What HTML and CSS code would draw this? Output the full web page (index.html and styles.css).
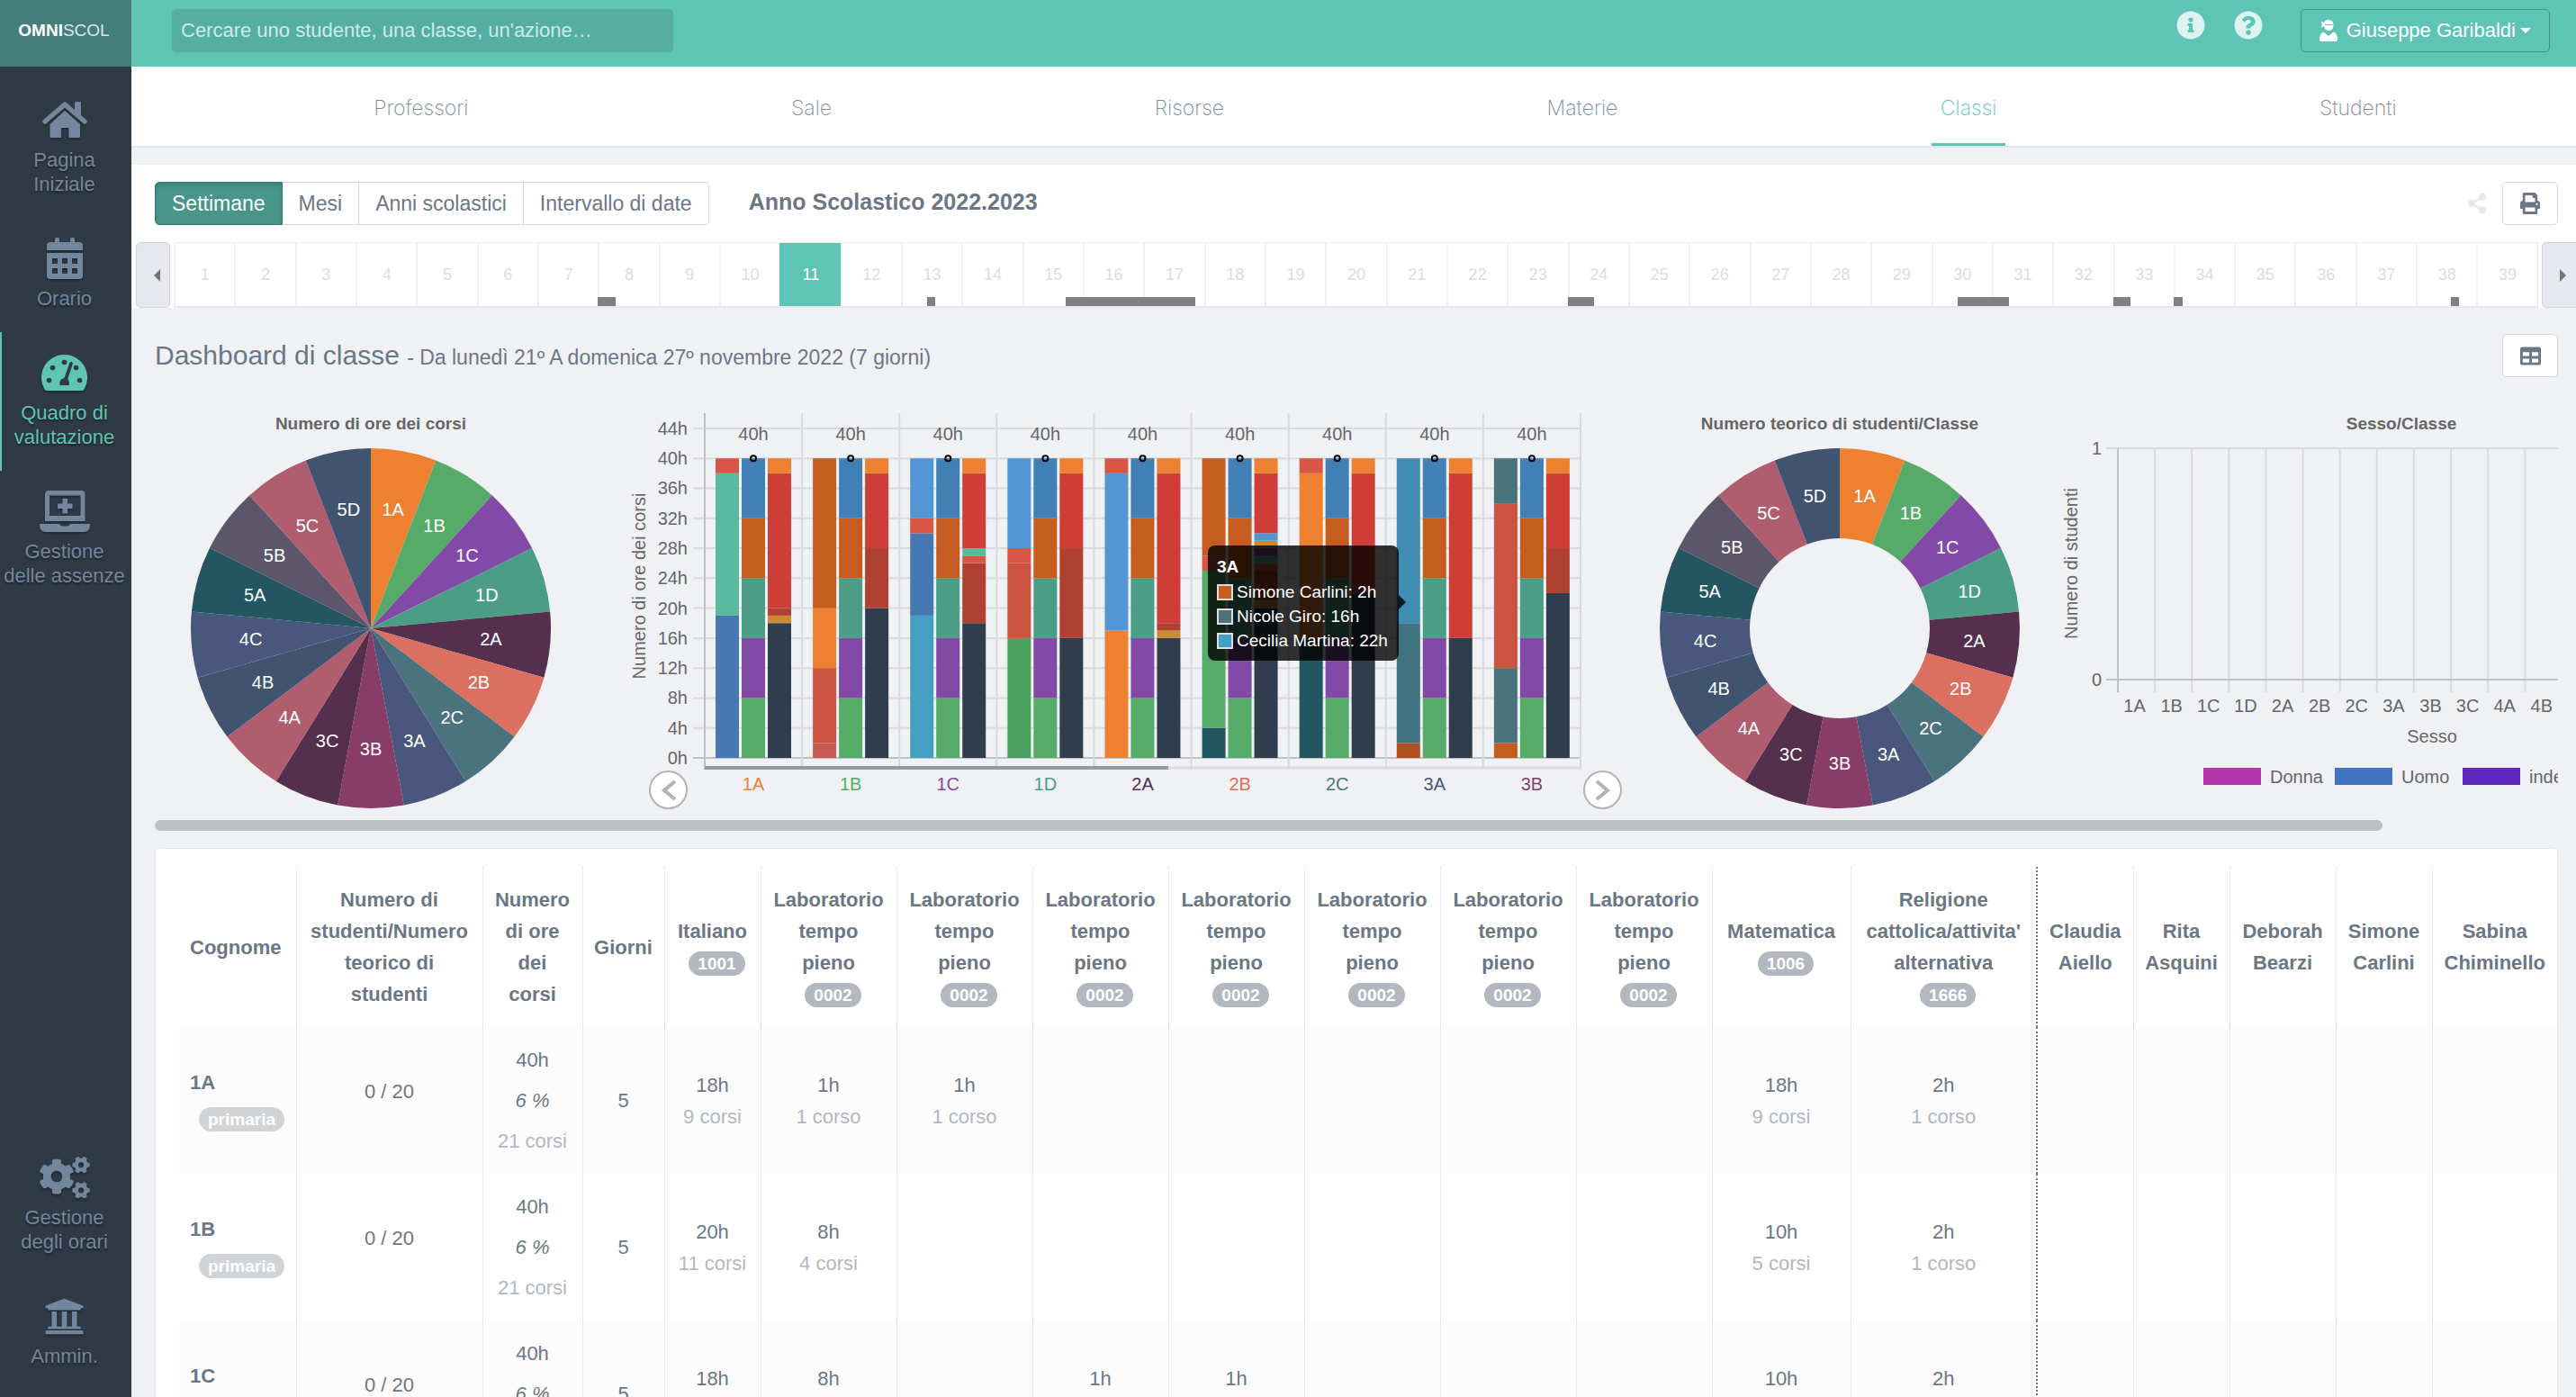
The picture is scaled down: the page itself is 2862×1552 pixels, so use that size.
FILE: index.html
```html
<!DOCTYPE html>
<html lang="it">
<head>
    <meta charset="UTF-8">
    <meta name="viewport" content="width=device-width, initial-scale=1.0">
    <title>Omniscol - Dashboard di classe</title>
    <link rel="stylesheet" href="styles.css">
</head>
<body>
    <div class="app">
        <aside class="sidebar">
            <a class="logo" href="#"><b>OMNI</b>SCOL</a>
            <nav class="side-nav">
                <a class="side-item" href="#">
                    <span class="side-icon">
                        <svg width="50" height="42" viewBox="0 0 50 42" fill="currentColor">
                            <path d="M36 2.500q0-1.500 1.500-1.500h4q1.500 0 1.500 1.500V17l-7-6z"/>
                            <path d="M3 23L25 4L47 23" fill="none" stroke="currentColor" stroke-width="5.500" stroke-linejoin="round" stroke-linecap="round"/>
                            <path d="M25 11L42 26V39.500q0 1.500-1.500 1.500H29.500V31q0-1-1-1H22q-1 0-1 1V41H10q-1.500 0-1.500-1.500V26z"/>
                        </svg>
                    </span>
                    Pagina<br>Iniziale
                </a>
                <a class="side-item" href="#">
                    <span class="side-icon">
                        <svg width="40" height="46" viewBox="0 0 40 46" fill="currentColor" fill-rule="evenodd">
                            <path d="M0 14V9q0-4 4-4H9V1.500Q9 0 10.500 0h2Q14 0 14 1.500V5H26V1.500Q26 0 27.500 0h2Q31 0 31 1.500V5h5q4 0 4 4v5z"/>
                            <path d="M0 17H40V42q0 4-4 4H4q-4 0-4-4zM6 23v6h6v-6zM17 23v6h6v-6zM28 23v6h6v-6zM6 34v6h6v-6zM17 34v6h6v-6zM28 34v6h6v-6z"/>
                        </svg>
                    </span>
                    Orario
                </a>
                <a class="side-item active" href="#">
                    <span class="side-icon">
                        <svg width="51" height="40" viewBox="0 0 51 40" fill="currentColor">
                            <path d="M25.500 0A25.500 25.500 0 0 0 3.500 38.500Q4.300 40 6 40H45Q46.700 40 47.500 38.500A25.500 25.500 0 0 0 25.500 0z"/>
                            <g fill="#303a44">
                                <circle cx="25.500" cy="8.500" r="2.800"/>
                                <circle cx="12.500" cy="14.500" r="2.800"/>
                                <circle cx="38.500" cy="14.500" r="2.800"/>
                                <circle cx="8.500" cy="28.500" r="2.800"/>
                                <circle cx="42.500" cy="28.500" r="2.800"/>
                                <path d="M31.500 8.800q1-1.400 2.300-.7t1 2.200L29.300 27q2.300 2.500 1.200 7H20.500q-1.500-6.500 5-8.200z"/>
                            </g>
                        </svg>
                    </span>
                    Quadro di<br>valutazione
                </a>
                <a class="side-item" href="#">
                    <span class="side-icon">
                        <svg width="56" height="46" viewBox="0 0 56 46" fill="currentColor" fill-rule="evenodd">
                            <path d="M6 34V4q0-4 4-4H46.500q4 0 4 4V34zM11 5.500V28H45.500V5.500z"/>
                            <path d="M25.500 9h5.500v5.500h5.500v5.500H31v5.500H25.500V20H20V14.500h5.500z"/>
                            <path d="M1 37H22q.5 2.500 3 2.500h6q2.500 0 3-2.500H55q1 0 1 1 0 8-7 8H7q-7 0-7-8 0-1 1-1z"/>
                        </svg>
                    </span>
                    Gestione<br>delle assenze
                </a>
            </nav>
            <nav class="side-nav side-bottom">
                <a class="side-item" href="#">
                    <span class="side-icon">
                        <svg width="56" height="46" viewBox="0 0 640 530" fill="currentColor">
                            <path id="small-cog" d="M512.100 191l-8.200 14.300c-3 5.300-9.400 7.500-15.100 5.400-11.800-4.400-22.600-10.700-32.100-18.600-4.600-3.800-5.800-10.500-2.800-15.700l8.200-14.300c-6.900-8-12.300-17.300-15.900-27.400h-16.500c-6 0-11.200-4.300-12.200-10.300-2-12-2.100-24.600 0-37.100 1-6 6.200-10.400 12.200-10.400h16.500c3.600-10.100 9-19.400 15.900-27.400l-8.200-14.300c-3-5.200-1.900-11.900 2.800-15.700 9.500-7.900 20.400-14.200 32.100-18.600 5.700-2.100 12.100.1 15.100 5.400l8.200 14.300c10.500-1.900 21.200-1.900 31.700 0L552 6.300c3-5.300 9.400-7.500 15.100-5.400 11.800 4.400 22.600 10.700 32.100 18.600 4.600 3.800 5.800 10.500 2.800 15.700l-8.200 14.300c6.900 8 12.300 17.300 15.900 27.400h16.500c6 0 11.200 4.300 12.200 10.300 2 12 2.100 24.600 0 37.100-1 6-6.200 10.400-12.200 10.400h-16.500c-3.600 10.100-9 19.400-15.900 27.400l8.200 14.300c3 5.200 1.900 11.900-2.800 15.700-9.500 7.900-20.400 14.200-32.100 18.600-5.700 2.100-12.100-.1-15.100-5.400l-8.200-14.300c-10.400 1.900-21.200 1.900-31.700 0zm-10.500-58.800c38.500 29.600 82.400-14.300 52.800-52.800-38.500-29.700-82.400 14.300-52.800 52.800z"/>
                            <use href="#small-cog" y="325"/>
                            <path d="M386.300 286.100l33.700 16.800c10.100 5.800 14.500 18.100 10.500 29.100-8.900 24.200-26.400 46.400-42.600 65.800-7.400 8.900-20.200 11.100-30.300 5.300l-29.100-16.800c-16 13.700-34.600 24.600-54.900 31.700v33.600c0 11.600-8.300 21.600-19.700 23.600-24.600 4.200-50.400 4.400-75.900 0-11.500-2-20-11.900-20-23.600V418c-20.300-7.200-38.900-18-54.900-31.700L74 403c-10 5.800-22.900 3.600-30.300-5.300-16.200-19.400-33.300-41.600-42.200-65.700-4-10.900.4-23.200 10.500-29.100l33.300-16.800c-3.900-20.900-3.900-42.400 0-63.400L12 205.800c-10.100-5.800-14.600-18.100-10.500-29 8.900-24.200 26-46.400 42.200-65.800 7.400-8.900 20.200-11.100 30.300-5.300l29.100 16.800c16-13.700 34.600-24.600 54.900-31.700V57.100c0-11.500 8.200-21.500 19.600-23.500 24.600-4.200 50.500-4.400 76-.1 11.500 2 20 11.900 20 23.600v33.600c20.300 7.200 38.900 18 54.900 31.700l29.100-16.800c10-5.800 22.900-3.600 30.300 5.300 16.200 19.400 33.200 41.600 42.100 65.800 4 10.900.1 23.200-10 29.100l-33.700 16.800c3.900 21 3.900 42.500 0 63.500zm-117.600 21.100c59.200-77-28.700-164.900-105.700-105.700-59.200 77 28.700 164.900 105.700 105.700z"/>
                        </svg>
                    </span>
                    Gestione<br>degli orari
                </a>
                <a class="side-item" href="#">
                    <span class="side-icon">
                        <svg width="45" height="45" viewBox="0 0 512 512" fill="currentColor">
                            <path d="M496 128v16a8 8 0 0 1-8 8h-24v12c0 6.627-5.373 12-12 12H60c-6.627 0-12-5.373-12-12v-12H24a8 8 0 0 1-8-8v-16a8 8 0 0 1 4.941-7.392l232-88a7.996 7.996 0 0 1 6.118 0l232 88A8 8 0 0 1 496 128zm-24 304H40c-13.255 0-24 10.745-24 24v16a8 8 0 0 0 8 8h464a8 8 0 0 0 8-8v-16c0-13.255-10.745-24-24-24zM96 192v192H60c-6.627 0-12 5.373-12 12v20h416v-20c0-6.627-5.373-12-12-12h-36V192h-64v192h-64V192h-64v192h-64V192H96z"/>
                        </svg>
                    </span>
                    Ammin.
                </a>
            </nav>
        </aside>

        <div class="content">
            <header class="topbar">
                <input class="search" type="text" aria-label="Cerca" placeholder="Cercare uno studente, una classe, un'azione…">
                <div class="topbar-right">
                    <button class="icon-btn" aria-label="Informazioni">
                        <svg width="32" height="32" viewBox="0 0 512 512" fill="currentColor"><path d="M256 8C119.043 8 8 119.083 8 256c0 136.997 111.043 248 248 248s248-111.003 248-248C504 119.083 392.957 8 256 8zm0 110c23.196 0 42 18.804 42 42s-18.804 42-42 42-42-18.804-42-42 18.804-42 42-42zm56 254c0 6.627-5.373 12-12 12h-88c-6.627 0-12-5.373-12-12v-24c0-6.627 5.373-12 12-12h12v-64h-12c-6.627 0-12-5.373-12-12v-24c0-6.627 5.373-12 12-12h64c6.627 0 12 5.373 12 12v100h12c6.627 0 12 5.373 12 12v24z"/></svg>
                    </button>
                    <button class="icon-btn" aria-label="Aiuto">
                        <svg width="32" height="32" viewBox="0 0 512 512" fill="currentColor"><path d="M504 256c0 136.997-111.043 248-248 248S8 392.997 8 256C8 119.083 119.043 8 256 8s248 111.083 248 248zM262.655 90c-54.497 0-89.255 22.957-116.549 63.758-3.536 5.286-2.353 12.415 2.715 16.258l34.699 26.310c5.205 3.947 12.621 3.008 16.665-2.122 17.864-22.658 30.113-35.797 57.303-35.797 20.429 0 45.698 13.148 45.698 32.958 0 14.976-12.363 22.667-32.534 33.976C247.128 238.528 216 254.941 216 296v4c0 6.627 5.373 12 12 12h56c6.627 0 12-5.373 12-12v-1.333c0-28.462 83.186-29.647 83.186-106.667 0-58.002-60.165-102-116.531-102zM256 338c-25.365 0-46 20.635-46 46 0 25.364 20.635 46 46 46s46-20.636 46-46c0-25.365-20.635-46-46-46z"/></svg>
                    </button>
                    <button class="user-btn">
                        <svg width="20" height="24" viewBox="0 0 20 24" fill="currentColor">
                            <path d="M10 0q5.500 0 5.500 6T10 12Q6 12 5 7L1.500 8.500 3 5 1.500 2 5 3Q6.500 0 10 0z"/>
                            <path d="M0 22q0-7 4.500-8.500L10 18l5.500-4.500Q20 15 20 22q0 2-2 2H2q-2 0-2-2z"/>
                            <path d="M6 5.500h8" stroke="#5ec4b5" stroke-width="1"/>
                        </svg>
                        <span>Giuseppe Garibaldi</span>
                        <i class="caret"></i>
                    </button>
                </div>
            </header>

            <nav class="tabs">
                <a class="tab" href="#">Professori</a>
                <a class="tab" href="#">Sale</a>
                <a class="tab" href="#">Risorse</a>
                <a class="tab" href="#">Materie</a>
                <a class="tab active" href="#">Classi</a>
                <a class="tab" href="#">Studenti</a>
            </nav>

            <section class="period">
                <div class="period-bar">
                    <div class="btn-group">
                        <button class="btn active">Settimane</button>
                        <button class="btn">Mesi</button>
                        <button class="btn">Anni scolastici</button>
                        <button class="btn">Intervallo di date</button>
                    </div>
                    <h2 class="year">Anno Scolastico 2022.2023</h2>
                    <svg class="share" width="20" height="24" viewBox="0 0 20 24" fill="currentColor">
                        <circle cx="4" cy="12" r="4"/><circle cx="16" cy="4.500" r="4"/><circle cx="16" cy="19.500" r="4"/>
                        <path d="M16 4.500L4 12l12 7.500" fill="none" stroke="currentColor" stroke-width="2.500"/>
                    </svg>
                    <button class="btn btn-icon" aria-label="Stampa">
                        <svg width="22" height="24" viewBox="0 0 512 512" preserveAspectRatio="none" fill="currentColor"><path d="M448 192V77.250c0-8.490-3.370-16.620-9.370-22.630L393.370 9.370c-6-6-14.140-9.370-22.630-9.370H96C78.330 0 64 14.330 64 32v160c-35.350 0-64 28.650-64 64v112c0 8.840 7.160 16 16 16h48v96c0 17.670 14.330 32 32 32h320c17.670 0 32-14.330 32-32v-96h48c8.840 0 16-7.160 16-16V256c0-35.350-28.650-64-64-64zm-64 256H128v-96h256v96zm0-224H128V64h192v48c0 8.840 7.160 16 16 16h48v96zm48 72c-13.250 0-24-10.750-24-24 0-13.260 10.750-24 24-24s24 10.740 24 24c0 13.250-10.750 24-24 24z"/></svg>
                    </button>
                </div>
                <div class="week-strip">
                    <button class="week-arrow prev" aria-label="Precedente"></button>
                    <div class="weeks" id="weeks"></div>
                    <button class="week-arrow next" aria-label="Successivo"></button>
                </div>
            </section>

            <main class="main">
                <div class="main-head">
                    <h1>Dashboard di classe <small>- Da lunedì 21º A domenica 27º novembre 2022 (7 giorni)</small></h1>
                    <button class="btn btn-icon" aria-label="Tabella">
                        <svg width="23" height="23" viewBox="0 0 512 512" fill="currentColor"><path d="M464 32H48C21.490 32 0 53.490 0 80v352c0 26.510 21.490 48 48 48h416c26.510 0 48-21.490 48-48V80c0-26.510-21.490-48-48-48zM224 416H64v-96h160v96zm0-160H64v-96h160v96zm224 160H288v-96h160v96zm0-160H288v-96h160v96z"/></svg>
                    </button>
                </div>

                <div class="charts">
                    <svg class="chart" id="hoursPie" width="480" height="472"></svg>
                    <div class="chart-box">
                        <svg class="chart" id="hoursBars" width="1152" height="472"></svg>
                        <button class="chart-nav left" aria-label="Classi precedenti"><svg width="18" height="24" viewBox="0 0 18 24"><path d="M16 2L4 12l12 10" fill="none" stroke="#b3b3b3" stroke-width="4"/></svg></button>
                        <button class="chart-nav right" aria-label="Classi successive"><svg width="18" height="24" viewBox="0 0 18 24"><path d="M2 2l12 10L2 22" fill="none" stroke="#b3b3b3" stroke-width="4"/></svg></button>
                        <div class="tooltip">
                            <strong>3A</strong>
                            <span><i class="swatch brown"></i>Simone Carlini: 2h</span>
                            <span><i class="swatch slate"></i>Nicole Giro: 16h</span>
                            <span><i class="swatch cyan"></i>Cecilia Martina: 22h</span>
                        </div>
                    </div>
                    <svg class="chart" id="studentsPie" width="480" height="472"></svg>
                    <svg class="chart" id="genderChart" width="768" height="472"></svg>
                </div>
                <div class="scrollbar"><div class="scrollbar-thumb"></div></div>

                <div class="panel">
                    <table>
                        <colgroup>
                            <col class="c-name"><col class="c-wide"><col class="c-hours"><col class="c-days"><col class="c-small">
                            <col class="c-lab" span="7"><col class="c-subject">
                            <col class="c-wide"><col class="c-small" span="2"><col class="c-mid"><col class="c-small"><col>
                        </colgroup>
                        <thead>
                            <tr>
                                <th class="name">Cognome</th>
                                <th>Numero di studenti/Numero teorico di studenti</th>
                                <th>Numero di ore dei corsi</th>
                                <th>Giorni</th>
                                <th>Italiano <span class="badge">1001</span></th>
                                <th>Laboratorio tempo pieno <span class="badge">0002</span></th>
                                <th>Laboratorio tempo pieno <span class="badge">0002</span></th>
                                <th>Laboratorio tempo pieno <span class="badge">0002</span></th>
                                <th>Laboratorio tempo pieno <span class="badge">0002</span></th>
                                <th>Laboratorio tempo pieno <span class="badge">0002</span></th>
                                <th>Laboratorio tempo pieno <span class="badge">0002</span></th>
                                <th>Laboratorio tempo pieno <span class="badge">0002</span></th>
                                <th>Matematica <span class="badge">1006</span></th>
                                <th class="last-subject">Religione cattolica/attivita' alternativa<br><span class="badge">1666</span></th>
                                <th>Claudia Aiello</th>
                                <th>Rita Asquini</th>
                                <th>Deborah Bearzi</th>
                                <th>Simone Carlini</th>
                                <th>Sabina Chiminello</th>
                            </tr>
                        </thead>
                        <tbody>
                            <tr>
                                <td class="name"><b>1A</b><span class="badge light">primaria</span></td>
                                <td class="ratio">0 / 20</td>
                                <td class="total">40h<em>6 %</em><span>21 corsi</span></td>
                                <td>5</td>
                                <td>18h<span>9 corsi</span></td>
                                <td>1h<span>1 corso</span></td>
                                <td>1h<span>1 corso</span></td>
                                <td></td><td></td><td></td><td></td><td></td>
                                <td>18h<span>9 corsi</span></td>
                                <td class="last-subject">2h<span>1 corso</span></td>
                                <td></td><td></td><td></td><td></td><td></td>
                            </tr>
                            <tr>
                                <td class="name"><b>1B</b><span class="badge light">primaria</span></td>
                                <td class="ratio">0 / 20</td>
                                <td class="total">40h<em>6 %</em><span>21 corsi</span></td>
                                <td>5</td>
                                <td>20h<span>11 corsi</span></td>
                                <td>8h<span>4 corsi</span></td>
                                <td></td><td></td><td></td><td></td><td></td><td></td>
                                <td>10h<span>5 corsi</span></td>
                                <td class="last-subject">2h<span>1 corso</span></td>
                                <td></td><td></td><td></td><td></td><td></td>
                            </tr>
                            <tr>
                                <td class="name"><b>1C</b><span class="badge light">primaria</span></td>
                                <td class="ratio">0 / 20</td>
                                <td class="total">40h<em>6 %</em><span>21 corsi</span></td>
                                <td>5</td>
                                <td>18h<span>9 corsi</span></td>
                                <td>8h<span>4 corsi</span></td>
                                <td></td>
                                <td>1h<span>1 corso</span></td>
                                <td>1h<span>1 corso</span></td>
                                <td></td><td></td><td></td>
                                <td>10h<span>5 corsi</span></td>
                                <td class="last-subject">2h<span>1 corso</span></td>
                                <td></td><td></td><td></td><td></td><td></td>
                            </tr>
                        </tbody>
                    </table>
                </div>
            </main>
        </div>
    </div>

    <script src="script.js"></script>
</body>
</html>
```

FILE: styles.css
```css
* {
    box-sizing: border-box;
}
body {
    margin: 0;
    font-family: "Liberation Sans", Arial, sans-serif;
    font-size: 22px;
    color: #6b7785;
    background-color: #f0f1f4;
}
a {
    color: inherit;
    text-decoration: none;
}
button {
    font: inherit;
    color: inherit;
    cursor: pointer;
}
.app {
    display: flex;
    height: 100vh;
    overflow: hidden;
}

/* Menu laterale */
.sidebar {
    width: 146px;
    flex-shrink: 0;
    display: flex;
    flex-direction: column;
    background-color: #303a44;
}
.logo {
    height: 74px;
    display: flex;
    align-items: center;
    justify-content: center;
    padding: 0 4px 6px 0;
    font-size: 19px;
    color: #d9e8e6;
    background-color: #437e7b;
}
.logo b {
    color: white;
}
.side-nav {
    padding-top: 14px;
}
.side-bottom {
    margin-top: auto;
    padding-bottom: 8px;
}
.side-item {
    display: block;
    padding: 20px 5px 24px 0;
    border-left: 2px solid transparent;
    text-align: center;
    line-height: 27px;
    white-space: nowrap;
    color: #72869e;
    text-shadow: 0 2px 2px rgba(0, 0, 0, 0.4);
}
.side-item.active {
    color: #5ec4b5;
    border-left-color: #5ec4b5;
}
.side-icon {
    height: 50px;
    margin-bottom: 6px;
    display: flex;
    align-items: center;
    justify-content: center;
}
.side-icon svg {
    filter: drop-shadow(0 2px 1px rgba(0, 0, 0, 0.3));
}

.content {
    flex: 1;
    min-width: 0;
    display: flex;
    flex-direction: column;
}

/* Barra superiore */
.topbar {
    height: 74px;
    flex-shrink: 0;
    display: flex;
    justify-content: space-between;
    align-items: flex-start;
    padding: 10px 29px 0 45px;
    background-color: #5ec4b5;
}
.search {
    width: 557px;
    height: 48px;
    padding: 0 10px;
    border: none;
    border-radius: 5px;
    font: inherit;
    color: white;
    background-color: #55aea2;
}
.search::placeholder {
    color: #cdebe6;
    opacity: 1;
}
.topbar-right {
    display: flex;
    align-items: flex-start;
}
.icon-btn {
    width: 32px;
    height: 32px;
    margin: 2px 32px 0 0;
    padding: 0;
    border: none;
    background: none;
    color: #def2ef;
}
.icon-btn svg {
    display: block;
}
.icon-btn + .user-btn {
    margin-left: 10px;
}
.user-btn {
    height: 48px;
    display: flex;
    align-items: center;
    padding: 0 20px;
    border: 1px solid #459389;
    border-radius: 5px;
    color: white;
    background: none;
}
.user-btn span {
    margin: 0 5px 0 10px;
}
.caret {
    border: 6px solid transparent;
    border-top-color: white;
    border-bottom: none;
}

/* Schede */
.tabs {
    height: 90px;
    flex-shrink: 0;
    display: flex;
    justify-content: space-around;
    padding: 0 20px 0 90px;
    border-bottom: 2px solid #e1e4ea;
    background-color: white;
}
.tab {
    padding: 0 10px;
    line-height: 92px;
    font-family: Inter, "Liberation Sans", sans-serif;
    font-size: 23px;
    font-weight: 200;
    color: #7d8a99;
}
.tab.active {
    color: #5ec4b5;
    box-shadow: inset 0 -3px #5ec4b5;
}

/* Periodo */
.period {
    flex-shrink: 0;
    margin-top: 19px;
    background-color: white;
}
.period-bar {
    display: flex;
    align-items: center;
    padding: 19px 20px 19px 26px;
}
.btn-group {
    display: flex;
}
.btn {
    height: 48px;
    padding: 0 18px;
    border: 1px solid #d3d6da;
    font-size: 23px;
    background-color: white;
}
.btn-group .btn + .btn {
    border-left: none;
}
.btn-group .btn:first-child {
    border-radius: 5px 0 0 5px;
}
.btn-group .btn:last-child {
    border-radius: 0 5px 5px 0;
}
.btn-group .btn.active {
    color: white;
    border-color: #2d7f73;
    background-color: #48968a;
    box-shadow: inset 0 3px 5px rgba(0, 0, 0, 0.15);
}
.btn-icon {
    width: 62px;
    padding: 0;
    border-radius: 5px;
    display: flex;
    align-items: center;
    justify-content: center;
}
.year {
    margin: 0 auto 4px 44px;
    font-size: 25px;
}
.share {
    margin-right: 18px;
    color: #e6e8ea;
}
.week-strip {
    display: flex;
    gap: 4px;
    padding-left: 5px;
}
.week-arrow {
    width: 38px;
    border: 1px solid #cfd2da;
    border-radius: 5px;
    padding: 0;
    display: flex;
    align-items: center;
    justify-content: center;
    background-color: #e7e8ee;
}
.week-arrow.next {
    border-right: none;
    border-radius: 5px 0 0 5px;
}
.week-arrow::before {
    content: "";
    border: 7px solid transparent;
}
.week-arrow.prev::before {
    border-right-color: #6b7785;
    border-left: none;
    margin-left: 8px;
}
.week-arrow.next::before {
    border-left-color: #6b7785;
    border-right: none;
    margin-left: 8px;
}
.weeks {
    position: relative;
    flex: 1;
    display: flex;
    height: 73px;
    border: 2px solid #e6e8eb;
    border-width: 1px 1px 2px 0;
}
.week {
    flex: 1;
    padding: 0;
    border: none;
    border-left: 2px solid #f0f1f3;
    font-size: 18px;
    color: #dadde2;
    background: none;
}
.week.active {
    color: white;
    border-color: #5ec4b5;
    background-color: #5ec4b5;
}
.holiday {
    position: absolute;
    bottom: 0;
    height: 10px;
    background-color: #808080;
}

/* Dashboard */
.main {
    flex: 1;
    min-height: 0;
    overflow: hidden;
    padding: 29px 20px 0 26px;
}
.main-head {
    display: flex;
    align-items: center;
    justify-content: space-between;
    margin-bottom: 20px;
}
h1 {
    margin: 0;
    font-size: 30px;
    font-weight: normal;
}
h1 small {
    font-size: 23px;
}
.charts {
    display: flex;
    overflow: hidden;
}
.chart {
    display: block;
    flex-shrink: 0;
}
.chart text {
    font-size: 20px;
    fill: #666;
    text-anchor: middle;
    dominant-baseline: central;
}
.chart .title {
    font-size: 19px;
    font-weight: bold;
}
.chart .slice-label {
    fill: white;
}
.chart .end {
    text-anchor: end;
}
.chart .start {
    text-anchor: start;
}
.chart-box {
    position: relative;
    flex-shrink: 0;
}
.chart-nav {
    position: absolute;
    bottom: 12px;
    width: 43px;
    height: 43px;
    padding: 0;
    border: 2px solid #b3b3b3;
    border-radius: 50%;
    display: flex;
    align-items: center;
    justify-content: center;
    background-color: white;
}
.chart-nav.left {
    left: 69px;
}
.chart-nav.right {
    right: 2px;
}
.tooltip {
    position: absolute;
    top: 167px;
    left: 690px;
    width: 212px;
    padding: 9px 10px;
    border-radius: 8px;
    font-size: 19px;
    line-height: 27px;
    white-space: nowrap;
    color: white;
    background-color: rgba(0, 0, 0, 0.8);
}
.tooltip::after {
    content: "";
    position: absolute;
    top: 55px;
    left: 100%;
    border: 8px solid transparent;
    border-left-color: rgba(0, 0, 0, 0.8);
    border-right: none;
}
.tooltip strong {
    display: block;
    line-height: 29px;
}
.tooltip span {
    display: flex;
    align-items: center;
}
.swatch {
    width: 18px;
    height: 18px;
    flex-shrink: 0;
    margin-right: 4px;
    border: 2px solid #ddd;
}
.swatch.brown {
    background-color: #c55c20;
}
.swatch.slate {
    background-color: #4b737d;
}
.swatch.cyan {
    background-color: #459fc3;
}
.scrollbar-thumb {
    width: 92.7%;
    height: 12px;
    border-radius: 6px;
    background-color: #bfc0c2;
}

/* Tabella */
.panel {
    margin-top: 19px;
    padding: 20px 0 0 26px;
    border: 1px solid #e3e6ea;
    border-radius: 5px;
    background-color: white;
}
table {
    width: 100%;
    table-layout: fixed;
    border-collapse: collapse;
    line-height: 35px;
}
.c-name {
    width: 130px;
}
.c-wide {
    width: 207px;
}
.c-hours {
    width: 111px;
}
.c-days {
    width: 91px;
}
.c-small {
    width: 107px;
}
.c-lab {
    width: 151px;
}
.c-subject {
    width: 154px;
}
.c-mid {
    width: 118px;
}
th, td {
    padding: 14px 12px;
    text-align: center;
    border-right: 1px dotted #d5d9dd;
}
th:last-child, td:last-child {
    border-right: none;
}
th {
    padding: 19px 12px;
}
td {
    height: 163px;
}
tbody tr:nth-child(odd) {
    background-color: #fcfcfc;
}
.last-subject {
    border-right: 2px dotted #777;
}
th.name, td.name {
    padding-left: 12px;
    padding-right: 0;
    text-align: left;
}
td.name {
    padding-bottom: 20px;
}
td.name b {
    display: block;
    line-height: 45px;
}
td span {
    display: block;
    color: #b2b8c0;
}
td.total {
    line-height: 45px;
}
td em {
    display: block;
}
td.ratio {
    padding-bottom: 34px;
}
.badge {
    display: inline-block;
    margin-left: 10px;
    padding: 0 10px;
    border-radius: 14px;
    font-size: 19px;
    font-weight: bold;
    line-height: 27px;
    color: white;
    background-color: #b3b8c0;
}
td .badge.light {
    display: inline-block;
    color: white;
    background-color: #d1d4d7;
}
```

FILE: script.js
```js
const CLASSES = [
    ['1A', '#ee8131'], ['1B', '#56ab69'], ['1C', '#8349a6'], ['1D', '#4b9e85'],
    ['2A', '#54304e'], ['2B', '#db6f60'], ['2C', '#4b737d'], ['3A', '#49577c'],
    ['3B', '#883d69'], ['3C', '#54304e'], ['4A', '#b05d6f'], ['4B', '#40536f'],
    ['4C', '#49577c'], ['5A', '#245661'], ['5B', '#5b566b'], ['5C', '#b05d6f'],
    ['5D', '#40536f']
];

// Inizio (in giorni) e durata delle vacanze
const HOLIDAYS = [[49, 2], [87, 1], [103, 15], [161, 3], [206, 6], [224, 2], [231, 1], [263, 1]];
const WEEKS = 39;

const C = {
    blue: '#4678b3', aqua: '#58ba9f', coral: '#d65745', brick: '#cb5340', rose: '#c95a56',
    green: '#56ab69', leaf: '#4ba25f', purple: '#8349a6', teal: '#4b9e85', brown: '#c55c20',
    steel: '#427fb5', dark: '#303d4e', gold: '#ca8b34', wine: '#b04131', red: '#ce3e36',
    orange: '#ee8131', cyan: '#459fc3', sky: '#5296d6', petrol: '#245661', slate: '#4b737d'
};

const ROOMS = [['green', 8], ['purple', 8], ['teal', 8], ['brown', 8], ['steel', 8]];

// Per ogni classe: ore per professore e ore per materia
const BARS = [
    [[['blue', 19], ['aqua', 19], ['coral', 2]], [['dark', 18], ['gold', 1], ['wine', 1], ['red', 18], ['orange', 2]]],
    [[['rose', 2], ['brick', 10], ['orange', 8], ['brown', 20]], [['dark', 20], ['wine', 8], ['red', 10], ['orange', 2]]],
    [[['cyan', 19], ['blue', 11], ['coral', 2], ['sky', 8]], [['dark', 18], ['wine', 8], ['coral', 1], ['aqua', 1], ['red', 10], ['orange', 2]]],
    [[['leaf', 16], ['brick', 10], ['coral', 2], ['sky', 12]], [['dark', 16], ['wine', 12], ['red', 10], ['orange', 2]]],
    [[['orange', 17], ['sky', 21], ['coral', 2]], [['dark', 16], ['gold', 1], ['wine', 1], ['red', 20], ['orange', 2]]],
    [[['petrol', 4], ['green', 21], ['coral', 2], ['brown', 13]], [['dark', 20], ['gold', 1], ['wine', 4], ['coral', 1], ['aqua', 1], ['purple', 1], ['gold', 1], ['sky', 1], ['red', 8], ['orange', 2]]],
    [[['petrol', 16], ['orange', 22], ['coral', 2]], [['dark', 22], ['red', 16], ['orange', 2]]],
    [[['#b05020', 2], ['#3f7380', 16], ['#418cb2', 22]], [['dark', 16], ['red', 22], ['orange', 2]]],
    [[['brown', 2], ['slate', 10], ['brick', 22], ['slate', 6]], [['dark', 22], ['wine', 6], ['red', 10], ['orange', 2]]]
];

function add(parent, tag, attrs, text) {
    const el = document.createElementNS('http://www.w3.org/2000/svg', tag);
    for (const key in attrs) el.setAttribute(key, attrs[key]);
    if (text !== undefined) el.textContent = text;
    parent.appendChild(el);
    return el;
}

function line(svg, x1, y1, x2, y2, color, width) {
    add(svg, 'line', { x1, y1, x2, y2, stroke: color || '#d9dadd', 'stroke-width': width || 2 });
}

function renderWeeks() {
    const box = document.getElementById('weeks');
    for (let i = 1; i <= WEEKS; i++) {
        const btn = document.createElement('button');
        btn.className = i === 11 ? 'week active' : 'week';
        btn.textContent = i;
        box.appendChild(btn);
    }
    HOLIDAYS.forEach(([start, days]) => {
        const bar = document.createElement('div');
        bar.className = 'holiday';
        bar.style.left = `${start / (WEEKS * 7) * 100}%`;
        bar.style.width = `${days / (WEEKS * 7) * 100}%`;
        box.appendChild(bar);
    });
}

function renderPie(id, title, inner, labelRadius) {
    const svg = document.getElementById(id);
    const cx = 240, cy = 259, r = 200;
    const step = Math.PI * 2 / CLASSES.length;
    const point = (radius, a) => `${cx + radius * Math.sin(a)} ${cy - radius * Math.cos(a)}`;

    add(svg, 'text', { x: cx, y: 31, class: 'title' }, title);
    CLASSES.forEach(([name, color], i) => {
        const a = i * step, b = a + step;
        add(svg, 'path', {
            d: `M${point(inner, a)}L${point(r, a)}A${r} ${r} 0 0 1 ${point(r, b)}L${point(inner, b)}` +
                (inner ? `A${inner} ${inner} 0 0 0 ${point(inner, a)}` : '') + 'Z',
            fill: color
        });
    });
    CLASSES.forEach(([name], i) => {
        const [x, y] = point(labelRadius, (i + 0.5) * step).split(' ');
        add(svg, 'text', { x, y, class: 'slice-label' }, name);
    });
}

function renderBars() {
    const svg = document.getElementById('hoursBars');
    const left = 131, right = 1104, zero = 403, hour = 8.32;
    const step = (right - left) / BARS.length;

    for (let h = 0; h <= 44; h += 4) {
        const y = zero - h * hour;
        line(svg, left - 13, y, right, y, h === 0 ? '#c0c1c4' : null);
        add(svg, 'text', { x: left - 19, y, class: 'end' }, `${h}h`);
    }
    for (let i = 0; i <= BARS.length; i++) {
        line(svg, left + i * step, 20, left + i * step, 416, i === 0 ? '#c0c1c4' : null);
    }
    add(svg, 'text', { transform: 'translate(58 212) rotate(-90)' }, 'Numero di ore dei corsi');

    BARS.forEach(([teachers, subjects], i) => {
        const x = left + i * step;
        [teachers, ROOMS, subjects].forEach((stack, j) => {
            let total = 0;
            stack.forEach(([color, hours]) => {
                total += hours;
                add(svg, 'rect', {
                    x: x + 12 + j * 29, y: zero - total * hour,
                    width: 26, height: hours * hour, fill: C[color] || color
                });
            });
        });
        const mid = x + step / 2;
        add(svg, 'text', { x: mid, y: 43 }, '40h');
        add(svg, 'circle', { cx: mid, cy: zero - 40 * hour, r: 3, fill: 'none', stroke: 'black', 'stroke-width': 2 });
        add(svg, 'text', { x: mid, y: 432, style: `fill: ${CLASSES[i][1]}` }, CLASSES[i][0]);
    });

    // Barra di scorrimento delle classi
    line(svg, left, 414, right, 414, '#d9dadd', 3);
    line(svg, left, 414, left + 515, 414, '#98999b', 4);
}

function renderGender() {
    const svg = document.getElementById('genderChart');
    const left = 69, right = 768, top = 59, zero = 316;
    const step = (right - left) / CLASSES.length;

    add(svg, 'text', { x: 384, y: 31, class: 'title' }, 'Sesso/Classe');
    line(svg, left - 13, top, right, top);
    CLASSES.forEach(([name], i) => {
        const x = left + i * step;
        line(svg, x, top, x, zero + 14, i === 0 ? '#c0c1c4' : null);
        add(svg, 'text', { x: x + step / 2 - 2, y: 345 }, name);
    });
    line(svg, left - 13, zero, right, zero, '#c0c1c4');
    add(svg, 'text', { x: left - 18, y: top, class: 'end' }, '1');
    add(svg, 'text', { x: left - 18, y: zero, class: 'end' }, '0');
    add(svg, 'text', { transform: 'translate(17 187) rotate(-90)' }, 'Numero di studenti');
    add(svg, 'text', { x: 418, y: 379 }, 'Sesso');

    [['Donna', '#b636ae', 164], ['Uomo', '#3f73c0', 310], ['indefinito', '#6029bd', 452]].forEach(([name, color, x]) => {
        add(svg, 'rect', { x, y: 414, width: 64, height: 19, fill: color });
        add(svg, 'text', { x: x + 74, y: 424, class: 'start' }, name);
    });
}

renderWeeks();
renderPie('hoursPie', 'Numero di ore dei corsi', 0, 134);
renderBars();
renderPie('studentsPie', 'Numero teorico di studenti/Classe', 100, 150);
renderGender();
```
